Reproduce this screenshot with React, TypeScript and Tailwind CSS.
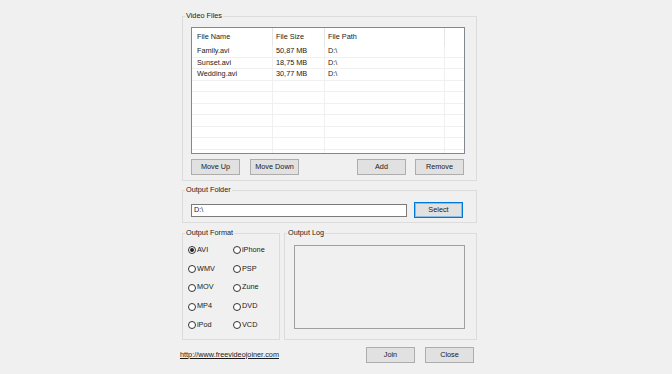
const files = [
  { name: "Family.avi", size: "50,87 MB", path: "D:\\" },
  { name: "Sunset.avi", size: "18,75 MB", path: "D:\\" },
  { name: "Wedding.avi", size: "30,77 MB", path: "D:\\" },
];

const formats = [
  ["AVI", "iPhone"],
  ["WMV", "PSP"],
  ["MOV", "Zune"],
  ["MP4", "DVD"],
  ["iPod", "VCD"],
];

function Button({ label, primary }: { label: string; primary?: boolean }) {
  return (
    <button
      className={`w-[49px] h-[16px] flex items-center justify-center bg-[#e1e1e1] border ${
        primary
          ? "border-[#0078d7] shadow-[inset_0_0_0_1px_#8cbbe6]"
          : "border-[#adadad]"
      }`}
    >
      {label}
    </button>
  );
}

function Radio({ label, checked }: { label: string; checked?: boolean }) {
  return (
    <div className="flex items-center gap-[1px]">
      <span className="w-[8px] h-[8px] rounded-full border border-[#333] bg-white flex items-center justify-center">
        {checked && <span className="w-[4px] h-[4px] rounded-full bg-[#222]" />}
      </span>
      <span>{label}</span>
    </div>
  );
}

function Group({
  title,
  className,
  children,
}: {
  title: string;
  className?: string;
  children: React.ReactNode;
}) {
  return (
    <fieldset className={`border border-[#dcdcdc] ${className ?? ""}`}>
      <legend className="ml-[2px] px-[1px] leading-[10px]">{title}</legend>
      {children}
    </fieldset>
  );
}

export default function App() {
  const rows = Array.from({ length: 10 }, (_, i) => files[i]);

  return (
    <div
      className="w-[672px] h-[374px] bg-[#f0f0f0] text-[#1a1a1a] text-[7.3px] antialiased pl-[182px] pt-[11px] overflow-hidden"
      style={{ fontFamily: '"Liberation Sans", Arial, sans-serif' }}
    >
      <div className="w-[295px] flex flex-col">
        {/* Video files */}
        <Group title="Video Files">
          <div className="pl-[8px] pr-[11px] pt-[6px] pb-[5px]">
            <div className="h-[127px] border border-[#828790] bg-white overflow-hidden">
              <div className="grid grid-cols-[81px_52px_120px_1fr] h-[18px]">
                <div className="border-r border-[#e5e5e5] pl-[5px] pt-[1px] flex items-center">File Name</div>
                <div className="border-r border-[#e5e5e5] pl-[3px] pt-[1px] flex items-center">File Size</div>
                <div className="border-r border-[#e5e5e5] pl-[3px] pt-[1px] flex items-center">File Path</div>
                <div />
              </div>
              {rows.map((f, i) => (
                <div
                  key={i}
                  className="grid grid-cols-[81px_52px_120px_1fr] h-[11.5px] border-b border-[#f0f0f0]"
                >
                  <div className="border-r border-[#f0f0f0] pl-[5px] flex items-center">{f?.name}</div>
                  <div className="border-r border-[#f0f0f0] pl-[3px] flex items-center">{f?.size}</div>
                  <div className="border-r border-[#f0f0f0] pl-[3px] flex items-center">{f?.path}</div>
                  <div />
                </div>
              ))}
            </div>
            <div className="mt-[5px] flex justify-between pr-[1px]">
              <div className="flex gap-[10px]">
                <Button label="Move Up" />
                <Button label="Move Down" />
              </div>
              <div className="flex gap-[9px]">
                <Button label="Add" />
                <Button label="Remove" />
              </div>
            </div>
          </div>
        </Group>

        {/* Output folder */}
        <Group title="Output Folder" className="mt-[4px]">
          <div className="pl-[8px] pr-[13px] pt-[7px] pb-[4px] flex items-center gap-[7px]">
            <div className="flex-1 h-[13px] border border-[#7a7a7a] bg-white flex items-center pl-[2px]">
              D:\
            </div>
            <Button label="Select" primary />
          </div>
        </Group>

        {/* Format + log */}
        <div className="mt-[5px] flex gap-[4px]">
          <Group title="Output Format" className="w-[98px]">
            <div className="pl-[5px] pt-[3px] pb-[3px]">
              {formats.map(([a, b]) => (
                <div key={a} className="h-[18.75px] flex items-center">
                  <div className="w-[45px]">
                    <Radio label={a} checked={a === "AVI"} />
                  </div>
                  <Radio label={b} />
                </div>
              ))}
            </div>
          </Group>
          <Group title="Output Log" className="w-[193px]">
            <div className="pl-[9px] pr-[11px] pt-[7px] pb-[10px]">
              <div className="h-[84px] border border-[#a0a0a0] bg-[#f0f0f0]" />
            </div>
          </Group>
        </div>

        {/* Footer */}
        <div className="mt-[7px] flex items-center pr-[3px]">
          <a className="-ml-[2px] underline text-[#1a1a1a]">http://www.freevideojoiner.com</a>
          <div className="ml-auto flex gap-[10px]">
            <Button label="Join" />
            <Button label="Close" />
          </div>
        </div>
      </div>
    </div>
  );
}
